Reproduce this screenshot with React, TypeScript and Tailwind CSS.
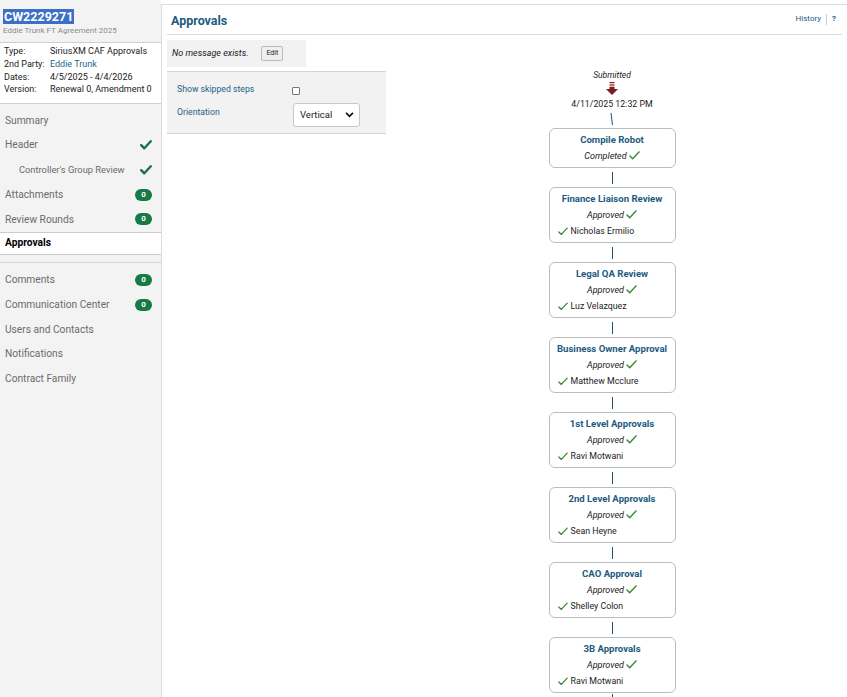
import React from 'react';

type Step = { title: string; status: string; approver?: string };

const steps: Step[] = [
  { title: 'Compile Robot', status: 'Completed' },
  { title: 'Finance Liaison Review', status: 'Approved', approver: 'Nicholas Ermilio' },
  { title: 'Legal QA Review', status: 'Approved', approver: 'Luz Velazquez' },
  { title: 'Business Owner Approval', status: 'Approved', approver: 'Matthew Mcclure' },
  { title: '1st Level Approvals', status: 'Approved', approver: 'Ravi Motwani' },
  { title: '2nd Level Approvals', status: 'Approved', approver: 'Sean Heyne' },
  { title: 'CAO Approval', status: 'Approved', approver: 'Shelley Colon' },
  { title: '3B Approvals', status: 'Approved', approver: 'Ravi Motwani' },
];

function Tick({ className = '' }: { className?: string }) {
  return (
    <svg viewBox="0 0 12 10" className={className} fill="none">
      <path d="M1 5.5 L4 8.5 L11 1" stroke="#3a8c35" strokeWidth="1.6" strokeLinecap="round" strokeLinejoin="round" />
    </svg>
  );
}

function BoldCheck() {
  return (
    <svg viewBox="0 0 12 10" className="h-[10px] w-[12px]" fill="none">
      <path d="M1.2 5.2 L4.3 8.3 L10.8 1.3" stroke="#1b7145" strokeWidth="2.4" strokeLinecap="round" strokeLinejoin="round" />
    </svg>
  );
}

function Badge() {
  return (
    <span className="flex h-[12px] w-[17px] items-center justify-center rounded-full bg-[#177a46] text-[8px] font-bold leading-none text-white">
      0
    </span>
  );
}

function NavItem({ label, right, indent }: { label: string; right?: React.ReactNode; indent?: boolean }) {
  return (
    <div
      className={`flex h-[24.7px] items-center justify-between pr-[9px] ${indent ? 'pl-[19px] text-[9.3px]' : 'pl-[5px]'}`}
    >
      <span>{label}</span>
      {right}
    </div>
  );
}

function Sidebar() {
  return (
    <aside className="w-[161px] shrink-0 bg-[#f3f3f3] text-[10.2px] text-[#6b6b6b]">
      <div className="px-[3px] pt-[9px]">
        <span className="bg-[#3c70c7] px-[1px] text-[12.5px] font-bold leading-[16px] text-white">CW2229271</span>
        <div className="text-[8px] text-[#8a8a8a]">Eddie Trunk FT Agreement 2025</div>
      </div>
      <div className="mt-[5px] whitespace-nowrap border-y border-[#cfcfcf] bg-white px-[4px] pb-[7px] pt-[2px] text-[9px] leading-[12.7px] text-[#222]">
        <div className="flex"><span className="w-[46px]">Type:</span><span>SiriusXM CAF Approvals</span></div>
        <div className="flex"><span className="w-[46px]">2nd Party:</span><span className="text-[#1f5f86]">Eddie Trunk</span></div>
        <div className="flex"><span className="w-[46px]">Dates:</span><span>4/5/2025 - 4/4/2026</span></div>
        <div className="flex"><span className="w-[46px]">Version:</span><span>Renewal 0, Amendment 0</span></div>
      </div>
      <nav className="pt-[4px]">
        <NavItem label="Summary" />
        <NavItem label="Header" right={<BoldCheck />} />
        <NavItem label="Controller's Group Review" indent right={<BoldCheck />} />
        <NavItem label="Attachments" right={<Badge />} />
        <NavItem label="Review Rounds" right={<Badge />} />
        <div className="flex h-[23px] items-center border-y border-[#cccccc] bg-white pl-[5px] font-bold text-black">
          Approvals
        </div>
        <div className="mt-[7px] border-t border-[#d6d6d6] pt-[5px]">
          <NavItem label="Comments" right={<Badge />} />
          <NavItem label="Communication Center" right={<Badge />} />
          <NavItem label="Users and Contacts" />
          <NavItem label="Notifications" />
          <NavItem label="Contract Family" />
        </div>
      </nav>
    </aside>
  );
}

function Connector({ h = 12 }: { h?: number }) {
  return <div className="w-px bg-[#23506f]" style={{ height: h }} />;
}

function StepBox({ step }: { step: Step }) {
  return (
    <div
      className={`flex w-[127px] flex-col rounded-[6px] border border-[#bdbdbd] bg-white ${step.approver ? 'h-[56px]' : 'h-[40px]'}`}
    >
      <div className="pt-[4px] text-center text-[9.6px] font-bold leading-[13px] text-[#1d5b82]">{step.title}</div>
      <div className="mt-[4px] flex items-center justify-center gap-[2px] text-[9px] italic leading-[12px] text-[#222]">
        {step.status}
        <Tick className="mb-[2px] h-[9px] w-[11px]" />
      </div>
      {step.approver && (
        <div className="mt-[4px] flex items-center gap-[3px] pl-[8px] text-[8.8px] leading-[12px] text-[#222]">
          <Tick className="h-[9px] w-[10px]" />
          {step.approver}
        </div>
      )}
    </div>
  );
}

function Flow() {
  return (
    <div className="flex flex-col items-center pt-[35px]">
      <div className="text-[8.5px] italic leading-[11px] text-[#222]">Submitted</div>
      <svg viewBox="0 0 12 13" className="mt-[1px] h-[13px] w-[12px]">
        <rect x="3.5" y="0" width="5" height="1.2" fill="#7c1c1c" />
        <rect x="3.5" y="2.4" width="5" height="1.2" fill="#7c1c1c" />
        <path d="M3.5 4.8 H8.5 V7 H12 L6 13 L0 7 H3.5 Z" fill="#7c1c1c" />
      </svg>
      <div className="mt-[3px] text-[8.8px] leading-[12px] text-[#222]">4/11/2025 12:32 PM</div>
      <svg viewBox="0 0 6 14" className="mt-[2px] h-[14px] w-[6px]">
        <path d="M2 1 L3.5 13" stroke="#23506f" strokeWidth="1" />
      </svg>
      <div className="h-[2px]" />
      {steps.map((s, i) => (
        <React.Fragment key={s.title}>
          {i > 0 && (
            <div className="py-[3.5px]">
              <Connector />
            </div>
          )}
          <StepBox step={s} />
        </React.Fragment>
      ))}
      <div className="pt-[1px]">
        <Connector h={10} />
      </div>
    </div>
  );
}

export default function App() {
  return (
    <div className="flex h-[697px] overflow-hidden bg-white font-['Roboto',sans-serif]">
      <Sidebar />
      <main className="mt-[4px] flex-1 border-l border-t border-[#dcdcdc] bg-white">
        <div className="mx-[5px] flex h-[30px] items-start justify-between border-b border-[#dcdcdc]">
          <h1 className="pl-[4px] pt-[7px] text-[12.5px] font-bold text-[#1e5b80]">Approvals</h1>
          <div className="flex items-center gap-[5px] pr-[6px] pt-[8px] text-[8px] text-[#1e5b80]">
            <span>History</span>
            <span className="h-[11px] w-px bg-[#ccc]" />
            <span className="font-bold">?</span>
          </div>
        </div>
        <div className="flex px-[5px]">
          <div className="w-[219px] shrink-0">
            <div className="mt-[5px] flex h-[27px] w-[139px] items-center bg-[#f2f2f2] pl-[5px]">
              <span className="text-[9px] italic text-[#222]">No message exists.</span>
              <button className="ml-[13px] h-[15px] rounded-[2px] border border-[#bbb] bg-[#efefef] px-[4px] text-[7px] leading-none text-[#222]">
                Edit
              </button>
            </div>
            <div className="mt-[4px] h-[63px] border-y border-[#d4d4d4] bg-[#f2f2f2] px-[10px] text-[8.7px] text-[#1f5f86]">
              <div className="flex h-[27px] items-end justify-between pb-[3px]">
                <span>Show skipped steps</span>
                <span className="mb-[1px] mr-[76px] h-[8px] w-[8px] rounded-[1px] border border-[#777] bg-white" />
              </div>
              <div className="mt-[4px] flex items-start justify-between">
                <span className="pt-[3px]">Orientation</span>
                <div className="mr-[16px] flex h-[24px] w-[67px] items-center justify-between rounded-[3px] border border-[#c8c8c8] bg-white pl-[6px] pr-[5px] text-[9.5px] text-[#222]">
                  Vertical
                  <svg viewBox="0 0 10 7" className="h-[6px] w-[9px]">
                    <path d="M1 1 L5 5 L9 1" stroke="#111" strokeWidth="2" fill="none" />
                  </svg>
                </div>
              </div>
            </div>
          </div>
          <div className="flex-1 pr-[4px]">
            <Flow />
          </div>
        </div>
      </main>
    </div>
  );
}
